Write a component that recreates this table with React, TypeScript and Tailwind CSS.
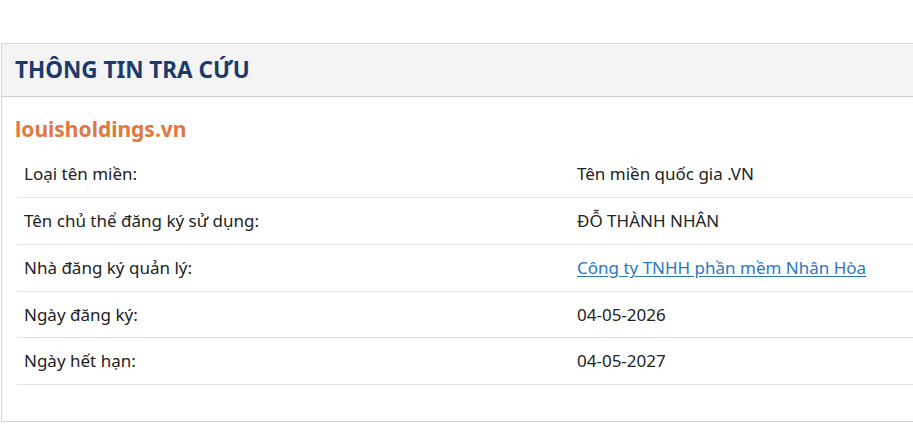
import React from "react";

const rows: { label: string; value: string; link?: boolean }[] = [
  { label: "Loại tên miền:", value: "Tên miền quốc gia .VN" },
  { label: "Tên chủ thể đăng ký sử dụng:", value: "ĐỖ THÀNH NHÂN" },
  { label: "Nhà đăng ký quản lý:", value: "Công ty TNHH phần mềm Nhân Hòa", link: true },
  { label: "Ngày đăng ký:", value: "04-05-2026" },
  { label: "Ngày hết hạn:", value: "04-05-2027" },
];

export default function App() {
  return (
    <div
      className="w-[913px] h-[444px] bg-white pt-[43px] pl-px overflow-hidden"
      style={{ fontFamily: '"Noto Sans", "Open Sans", sans-serif' }}
    >
      <div className="border-t border-l border-b border-[#d4d4d4] h-[379px]">
        <div className="h-[53px] bg-[#f4f4f4] border-b border-[#d0d0d0] flex items-center pl-[13px]">
          <h2 className="text-[22.5px] font-bold text-[#1c3a6b]">THÔNG TIN TRA CỨU</h2>
        </div>
        <div className="pl-[15px] pt-[18px]">
          <div className="text-[21px] font-bold text-[#e0783f] leading-[28px] mb-[8px] -ml-[2px]">louisholdings.vn</div>
          <div>
            {rows.map((r, i) => (
              <div
                key={r.label}
                className={`flex ${i === 3 ? "h-[46px]" : "h-[47px]"} items-center border-b border-[#e3e3e3] text-[17px] text-[#222]`}
              >
                <div className="w-[560px] pl-[7px]">{r.label}</div>
                <div>
                  {r.link ? (
                    <a href="#" className="text-[#2a78c2] underline underline-offset-2">{r.value}</a>
                  ) : (
                    r.value
                  )}
                </div>
              </div>
            ))}
          </div>
        </div>
      </div>
    </div>
  );
}
